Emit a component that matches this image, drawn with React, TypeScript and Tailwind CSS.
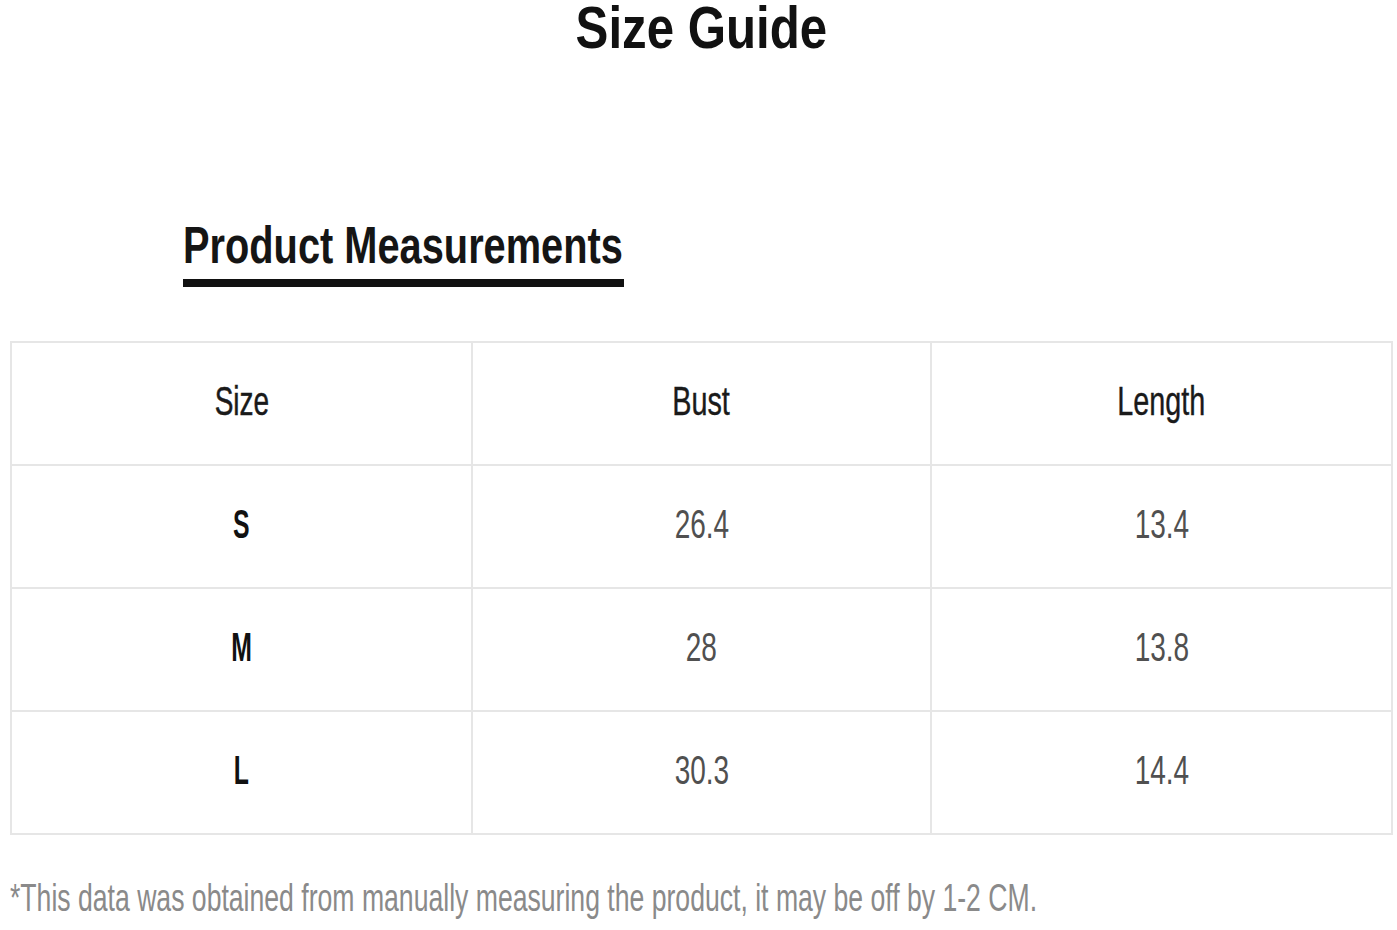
const rows = [
  { size: "S", bust: "26.4", length: "13.4" },
  { size: "M", bust: "28", length: "13.8" },
  { size: "L", bust: "30.3", length: "14.4" },
];

const font = { fontFamily: '"Liberation Sans", Arial, sans-serif' };

function Cell({ children, tone, last }: { children: React.ReactNode; tone: string; last?: boolean }) {
  return (
    <div
      className={`flex items-center justify-center h-[121px] pb-[5px] ${last ? "" : "border-r-2 border-[#e6e6e6]"}`}
    >
      <span className={`inline-block text-[40px] leading-none ${tone}`}>{children}</span>
    </div>
  );
}

export default function App() {
  return (
    <div className="w-[1397px] h-[930px] bg-white overflow-hidden" style={font}>
      {/* Title */}
      <div className="-mt-[2px] text-center leading-none">
        <span className="inline-block text-[60px] font-bold text-[#111] scale-x-[0.82] translate-x-[3px]">
          Size Guide
        </span>
      </div>

      {/* Section heading */}
      <div className="mt-[161px] pl-[183px]">
        <span className="inline-block origin-left text-[52px] font-bold leading-none text-[#151515] scale-x-[0.765]">
          Product Measurements
        </span>
        <div className="mt-[8px] w-[441px] h-[8px] bg-[#111]"></div>
      </div>

      {/* Table */}
      <div className="mt-[54px] ml-[10px] w-[1383px] border-2 border-[#e6e6e6]">
        <div className="grid grid-cols-[461px_459px_459px] border-b-2 border-[#e6e6e6]">
          <Cell tone="text-[#1a1a1a] scale-x-[0.7] [-webkit-text-stroke:0.5px]">Size</Cell>
          <Cell tone="text-[#1a1a1a] scale-x-[0.72] [-webkit-text-stroke:0.4px]">Bust</Cell>
          <Cell tone="text-[#1a1a1a] scale-x-[0.72] [-webkit-text-stroke:0.4px]" last>
            Length
          </Cell>
        </div>
        {rows.map((r, i) => (
          <div
            key={r.size}
            className={`grid grid-cols-[461px_459px_459px] ${i < rows.length - 1 ? "border-b-2 border-[#e6e6e6]" : ""}`}
          >
            <Cell tone="text-[#111] font-bold scale-x-[0.62]">{r.size}</Cell>
            <Cell tone="text-[#505050] scale-x-[0.7]">{r.bust}</Cell>
            <Cell tone="text-[#505050] scale-x-[0.7]" last>
              {r.length}
            </Cell>
          </div>
        ))}
      </div>

      {/* Note */}
      <div className="mt-[44px] pl-[10px] leading-none whitespace-nowrap">
        <span className="inline-block origin-left text-[38px] text-[#8a8a8a] scale-x-[0.7]">
          *This data was obtained from manually measuring the product, it may be off by 1-2 CM.
        </span>
      </div>
    </div>
  );
}
